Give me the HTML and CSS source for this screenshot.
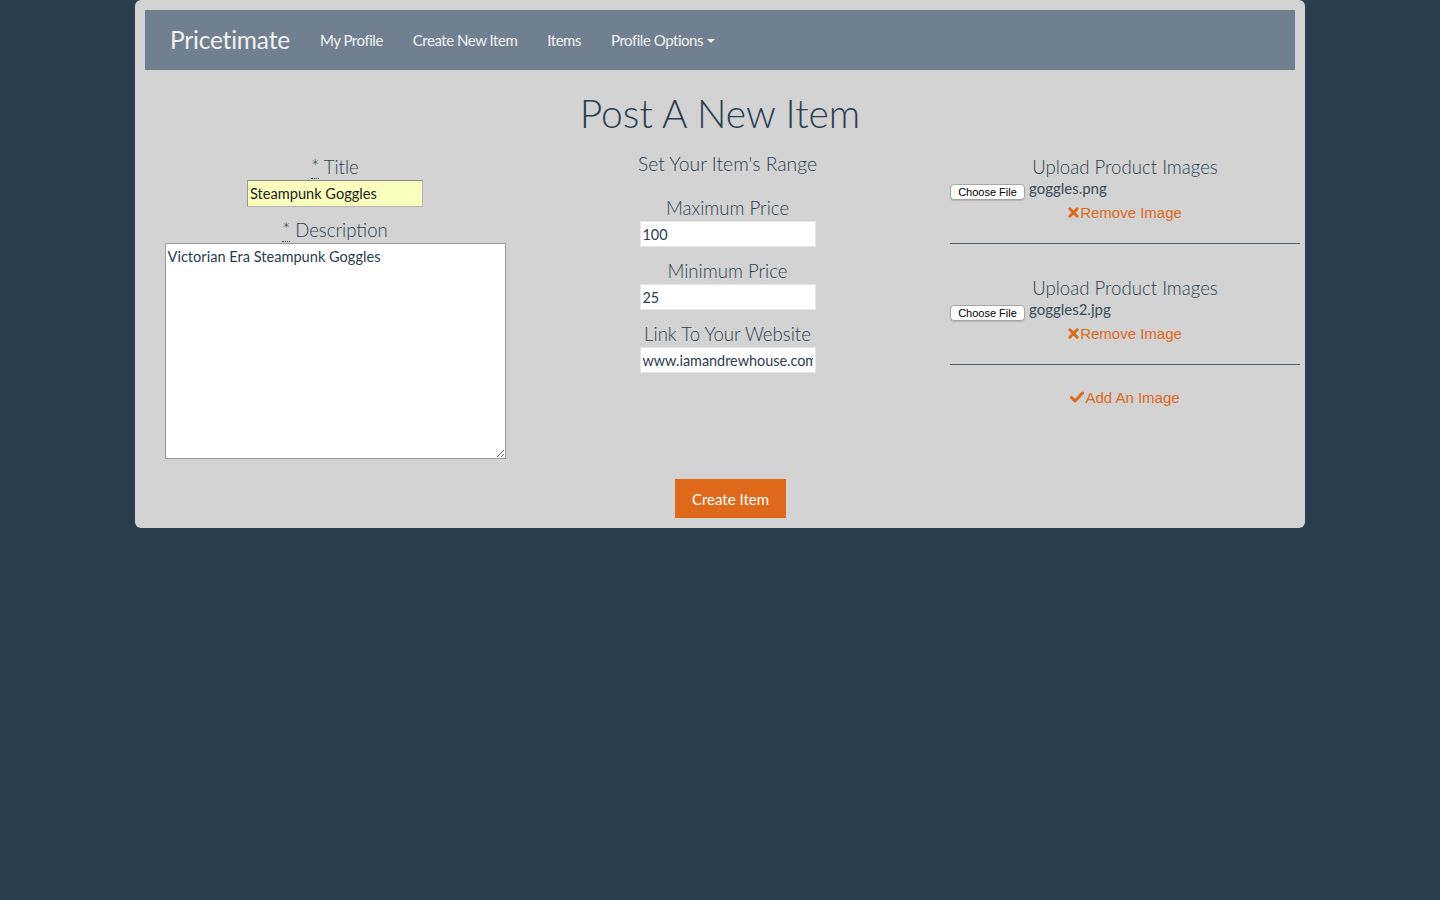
FILE: index.html
```html
<!DOCTYPE html>
<html>
<head>
<meta charset="utf-8">
<title>Pricetimate</title>
<link rel="stylesheet" href="styles.css">
</head>
<body>
<div class="page">
  <nav class="navbar">
    <a class="brand" href="#">Pricetimate</a>
    <ul class="nav">
      <li><a href="#">My Profile</a></li>
      <li><a href="#">Create New Item</a></li>
      <li><a href="#">Items</a></li>
      <li><a href="#">Profile Options <span class="caret"></span></a></li>
    </ul>
  </nav>

  <h1 class="page-title">Post A New Item</h1>

  <form class="item-form">
    <div class="row">
      <div class="col col-1">
        <label class="lbl lbl-title"><abbr title="required">*</abbr> Title</label>
        <input class="in-title" type="text" value="Steampunk Goggles">
        <label class="lbl lbl-desc"><abbr title="required">*</abbr> Description</label>
        <textarea class="in-desc">Victorian Era Steampunk Goggles</textarea>
      </div>

      <div class="col col-2">
        <h4 class="range-head">Set Your Item's Range</h4>
        <label class="lbl lbl-max">Maximum Price</label>
        <input class="in-price" type="text" value="100">
        <label class="lbl lbl-small">Minimum Price</label>
        <input class="in-price" type="text" value="25">
        <label class="lbl lbl-small">Link To Your Website</label>
        <input class="in-price" type="text" value="www.iamandrewhouse.com">
      </div>

      <div class="col col-3">
        <div class="upload">
          <h4 class="upload-head">Upload Product Images</h4>
          <div class="file-row">
            <span class="file-btn">Choose File</span>
            <span class="file-name">goggles.png</span>
          </div>
          <a class="action" href="#"><svg class="ic" viewBox="0 0 12 12" width="11" height="11"><path d="M2 2 L10 10 M10 2 L2 10" stroke="currentColor" stroke-width="3.2" stroke-linecap="round"/></svg>Remove Image</a>
          <hr class="sep">
        </div>
        <div class="upload upload-2">
          <h4 class="upload-head">Upload Product Images</h4>
          <div class="file-row">
            <span class="file-btn">Choose File</span>
            <span class="file-name">goggles2.jpg</span>
          </div>
          <a class="action" href="#"><svg class="ic" viewBox="0 0 12 12" width="11" height="11"><path d="M2 2 L10 10 M10 2 L2 10" stroke="currentColor" stroke-width="3.2" stroke-linecap="round"/></svg>Remove Image</a>
          <hr class="sep">
        </div>
        <a class="action add" href="#"><svg class="ic ic-ok" viewBox="0 0 14 12" width="14" height="12"><path d="M1.5 6.5 L5 10 L12.5 2" fill="none" stroke="currentColor" stroke-width="3" stroke-linecap="round" stroke-linejoin="round"/></svg>Add An Image</a>
      </div>
    </div>

    <div class="submit-row">
      <button type="button" class="btn-create">Create Item</button>
    </div>
  </form>
</div>
</body>
</html>
```

FILE: styles.css
```css
* { box-sizing: border-box; }

html, body {
  margin: 0;
  padding: 0;
}

body {
  background: #2b3e50;
  font-family: "Lato", "Liberation Sans", sans-serif;
  font-size: 15px;
  color: #2b3e50;
  min-height: 900px;
}

.page {
  width: 1170px;
  margin: 0 auto;
  background: #d3d3d3;
  border-radius: 6px;
  padding: 10px 10px 10px;
}

/* navbar */
.navbar {
  height: 60px;
  background: #708090;
  display: flex;
  align-items: center;
  padding-left: 25px;
}

.brand {
  color: #f2f2f2;
  text-decoration: none;
  font-size: 24.5px;
  font-weight: 400;
  letter-spacing: -0.2px;
  padding-right: 15px;
  line-height: 60px;
}

.nav {
  list-style: none;
  margin: 0;
  padding: 0;
  display: flex;
}

.nav a {
  display: block;
  color: #f2f2f2;
  text-decoration: none;
  font-size: 15px;
  letter-spacing: -0.47px;
  padding: 0 15px;
  line-height: 60px;
}

.caret {
  display: inline-block;
  width: 0;
  height: 0;
  border-top: 4px solid #f2f2f2;
  border-left: 4px solid transparent;
  border-right: 4px solid transparent;
  vertical-align: middle;
  margin-left: 1px;
  margin-top: -2px;
}

/* title */
.page-title {
  margin: 21px 0 0;
  text-align: center;
  font-size: 39px;
  font-weight: 300;
  line-height: 44px;
  color: #2b3e50;
}

/* form layout */
.row {
  display: grid;
  grid-template-columns: 390px 395px 375px;
  margin: 0 -10px 0 -5px;
}

.col {
  display: flex;
  flex-direction: column;
  align-items: center;
}

.col-3 { padding-left: 25px; padding-right: 0; align-items: stretch; }

.lbl {
  display: block;
  font-size: 18.6px;
  font-weight: 300;
  line-height: 22px;
  color: #2b3e50;
}

.lbl abbr {
  text-decoration: none;
  border-bottom: 1px dotted #2b3e50;
  cursor: help;
}

.lbl-title { margin-top: 21px; margin-bottom: 2px; }
.lbl-desc { margin-top: 12px; margin-bottom: 2px; }

.in-title {
  width: 176px;
  height: 27px;
  background: #faffbd;
  border: 1px solid #b5b5b5;
  border-top-color: #8a8a8a;
  border-left-color: #9a9a9a;
  font-family: "Lato", "Liberation Sans", sans-serif;
  font-size: 14.6px;
  color: #222;
  padding: 0 2px;
  margin: 0;
}

.in-desc {
  width: 341px;
  height: 216px;
  background: #fff;
  border: 1px solid #9a9a9a;
  font-family: "Lato", "Liberation Sans", sans-serif;
  font-size: 14.6px;
  color: #2b3e50;
  padding: 3px 2px;
  margin: 0;
  resize: both;
  line-height: 20px;
}

.range-head {
  margin: 18px 0 0;
  font-size: 19.3px;
  font-weight: 300;
  line-height: 22px;
}

.lbl-max { margin-top: 22px; margin-bottom: 2px; }
.lbl-small { margin-top: 13px; margin-bottom: 2px; }

.in-price {
  width: 176px;
  height: 26px;
  background: #fff;
  border: 1px solid #e6e6e6;
  font-family: "Lato", "Liberation Sans", sans-serif;
  font-size: 14.4px;
  color: #2b3e50;
  padding: 0 2px;
  margin: 0;
}

/* uploads */
.upload {
  display: flex;
  flex-direction: column;
}

.upload-head {
  margin: 21px 0 0;
  font-size: 18.6px;
  font-weight: 300;
  line-height: 22px;
  text-align: center;
}

.upload-2 .upload-head { margin-top: 33px; }

.file-row {
  display: flex;
  align-items: flex-start;
  height: 20px;
}

.file-btn {
  display: inline-block;
  margin-top: 6px;
  width: 75px;
  height: 16px;
  line-height: 14px;
  background: #fff;
  border: 1px solid #a6a6a6;
  border-radius: 4px;
  font-family: "Liberation Sans", Arial, sans-serif;
  font-size: 11px;
  color: #000;
  text-align: center;
  box-shadow: 0 1px 1px rgba(0,0,0,0.15);
}

.file-name {
  margin-left: 4px;
  font-size: 15px;
  line-height: 20px;
  color: #3a4b5c;
}

.action {
  display: flex;
  align-items: center;
  justify-content: center;
  margin-top: 4px;
  height: 20px;
  color: #df691a;
  text-decoration: none;
  font-family: "Liberation Sans", Arial, sans-serif;
  font-size: 15px;
}

.ic { margin-right: 1px; }

.sep {
  margin: 21px 0 0;
  border: 0;
  border-top: 1px solid #4e5d6c;
  height: 0;
}

.add { margin-top: 22px; }

/* submit */
.submit-row {
  display: flex;
  justify-content: center;
  margin-top: 20px;
  padding-left: 21px;
}

.btn-create {
  height: 39px;
  width: 111px;
  background: #df691a;
  border: 0;
  border-radius: 0;
  color: #fff;
  font-family: "Lato", "Liberation Sans", sans-serif;
  font-size: 15px;
  padding: 0;
  cursor: pointer;
}
```
